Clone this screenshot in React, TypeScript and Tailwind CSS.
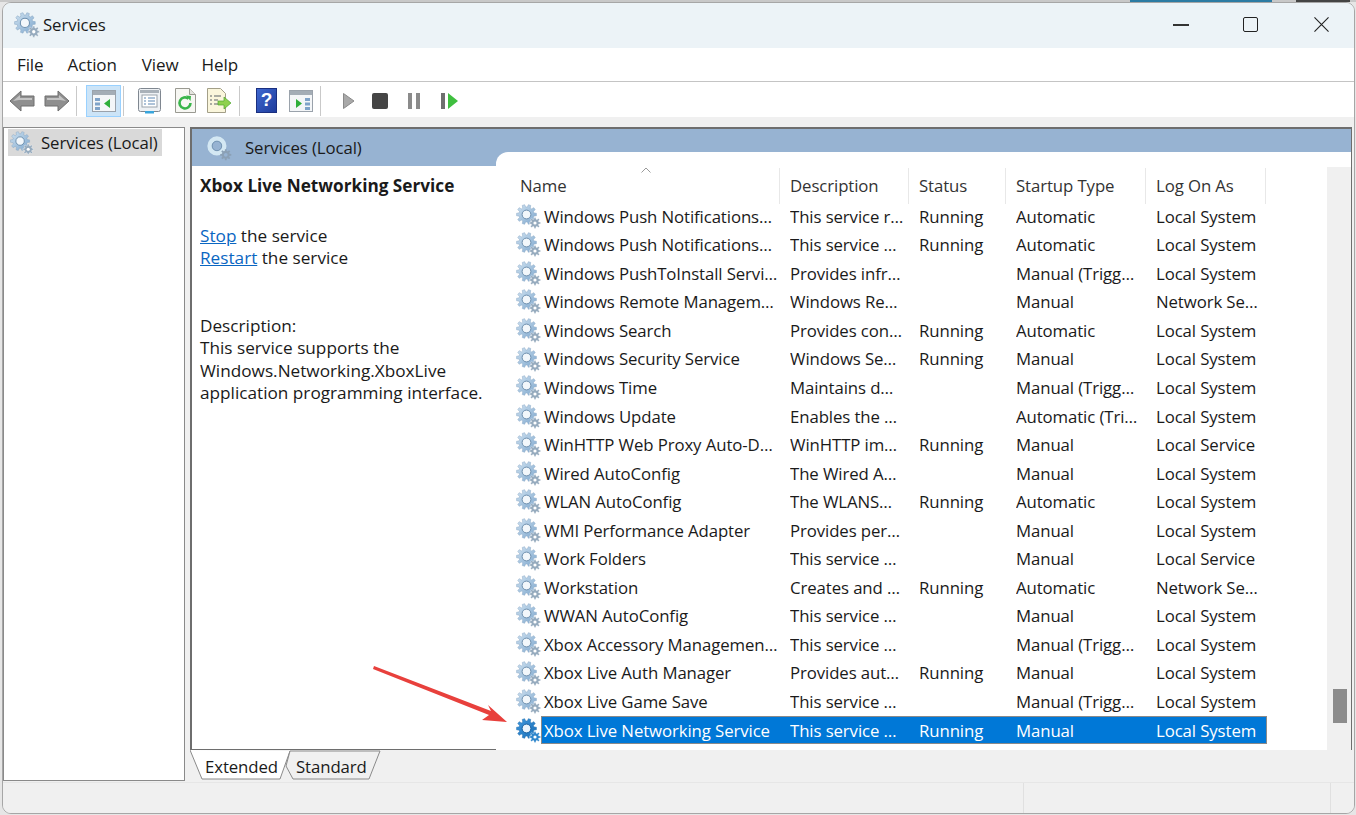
import { useId } from "react"

const rows = [
  ["Windows Push Notifications…", "This service r…", "Running", "Automatic", "Local System"],
  ["Windows Push Notifications…", "This service …", "Running", "Automatic", "Local System"],
  ["Windows PushToInstall Servi…", "Provides infr…", "", "Manual (Trigg…", "Local System"],
  ["Windows Remote Managem…", "Windows Re…", "", "Manual", "Network Se…"],
  ["Windows Search", "Provides con…", "Running", "Automatic", "Local System"],
  ["Windows Security Service", "Windows Se…", "Running", "Manual", "Local System"],
  ["Windows Time", "Maintains d…", "", "Manual (Trigg…", "Local System"],
  ["Windows Update", "Enables the …", "", "Automatic (Tri…", "Local System"],
  ["WinHTTP Web Proxy Auto-D…", "WinHTTP im…", "Running", "Manual", "Local Service"],
  ["Wired AutoConfig", "The Wired A…", "", "Manual", "Local System"],
  ["WLAN AutoConfig", "The WLANS…", "Running", "Automatic", "Local System"],
  ["WMI Performance Adapter", "Provides per…", "", "Manual", "Local System"],
  ["Work Folders", "This service …", "", "Manual", "Local Service"],
  ["Workstation", "Creates and …", "Running", "Automatic", "Network Se…"],
  ["WWAN AutoConfig", "This service …", "", "Manual", "Local System"],
  ["Xbox Accessory Managemen…", "This service …", "", "Manual (Trigg…", "Local System"],
  ["Xbox Live Auth Manager", "Provides aut…", "Running", "Manual", "Local System"],
  ["Xbox Live Game Save", "This service …", "", "Manual (Trigg…", "Local System"],
  ["Xbox Live Networking Service", "This service …", "Running", "Manual", "Local System"],
]

function gearPath(cx: number, cy: number, outer: number, inner: number, teeth: number) {
  const pts: string[] = []
  const step = (Math.PI * 2) / teeth
  for (let i = 0; i < teeth; i++) {
    const a = i * step
    const offs: [number, number][] = [
      [-0.32, inner],
      [-0.2, outer],
      [0.2, outer],
      [0.32, inner],
    ]
    for (const [o, r] of offs) {
      const t = a + o * step
      pts.push(`${(cx + Math.cos(t) * r).toFixed(2)},${(cy + Math.sin(t) * r).toFixed(2)}`)
    }
  }
  return "M" + pts.join("L") + "Z"
}

function Gear({ size = 25, selected = false }: { size?: number; selected?: boolean }) {
  const id = useId()
  return (
    <svg width={size} height={size} viewBox="0 0 25 25" className="shrink-0">
      <defs>
        <linearGradient id={id} x1="0" y1="0" x2="1" y2="1">
          <stop offset="0" stopColor={selected ? "#3f97dc" : "#cfe2f1"} />
          <stop offset="1" stopColor={selected ? "#1a6fb8" : "#7ea7cd"} />
        </linearGradient>
      </defs>
      <path d={gearPath(10.5, 10.5, 10, 7.6, 10)} fill={`url(#${id})`} stroke={selected ? "#1f6cae" : "#8aa9c6"} strokeWidth="0.5" />
      <circle cx="10.5" cy="10.5" r="4.4" fill={selected ? "#eaf4fc" : "#f2f7fb"} stroke={selected ? "#17609f" : "#6d8fae"} strokeWidth="1" />
      <path d={gearPath(19, 19, 5.6, 4, 8)} fill={selected ? "#2f86cc" : "#96abbe"} stroke="#fff" strokeWidth="0.4" />
      <circle cx="19" cy="19" r="1.6" fill="#fff" />
    </svg>
  )
}

function FadedGear() {
  return (
    <svg width="26" height="26" viewBox="0 0 25 25" className="shrink-0">
      <circle cx="10.5" cy="10.5" r="7" fill="none" stroke="#d4e8f3" strokeWidth="4.4" />
      <circle cx="10.5" cy="10.5" r="4.6" fill="#97b3d2" stroke="#6a8cab" strokeWidth="0.8" />
      <path d={gearPath(19, 19, 5.4, 3.8, 8)} fill="#8ba0b5" />
      <circle cx="19" cy="19" r="1.8" fill="#97b3d2" />
    </svg>
  )
}

function NavArrow({ flip = false }: { flip?: boolean }) {
  return (
    <svg width="26" height="24" viewBox="0 0 26 24" className={flip ? "-scale-x-100" : ""}>
      <path d="M1 12 12 2v5h13v10H12v5Z" fill="#8f8f8f" stroke="#6e6e6e" />
      <path d="M4 12 11 6v3h12v2H10Z" fill="#c4c4c4" />
    </svg>
  )
}

function PaneIcon({ side }: { side: "left" | "right" }) {
  const listX = side === "left" ? 3 : 16
  const arrow = side === "left" ? "M18 10v9l-6-4.5Z" : "M7 10v9l6-4.5Z"
  return (
    <svg width="24" height="24" viewBox="0 0 24 24">
      <rect x="0.5" y="1.5" width="23" height="21" fill="#f4f6f8" stroke="#9aa2ab" />
      <rect x="1" y="2" width="22" height="4" fill="#a4adb6" />
      <rect x={listX} y="9" width="5" height="3" fill="#7fa3c9" />
      <rect x={listX} y="13.5" width="5" height="3" fill="#7fa3c9" />
      <rect x={listX} y="18" width="5" height="3" fill="#7fa3c9" />
      <path d={arrow} fill="#2fae3a" />
    </svg>
  )
}

function PropsIcon() {
  return (
    <svg width="23" height="26" viewBox="0 0 23 26">
      <rect x="0.5" y="0.5" width="22" height="23" rx="2" fill="#eef1f4" stroke="#7f8790" />
      <rect x="2" y="2" width="19" height="3" fill="#a9b1b9" />
      <rect x="4" y="7" width="15" height="12" fill="#fff" stroke="#9aa3ab" />
      <path d="M6 10h2M6 13h2M6 16h2M10 10h7M10 13h7M10 16h7" stroke="#5f87b3" strokeWidth="1.2" />
      <rect x="7" y="23" width="9" height="2.5" fill="#38a5dc" />
    </svg>
  )
}

function RefreshIcon() {
  return (
    <svg width="21" height="25" viewBox="0 0 21 25">
      <path d="M.5.5h14l6 6v18H.5Z" fill="#f7f7f3" stroke="#9a9a92" />
      <path d="M14.5.5v6h6" fill="#e4e4de" stroke="#9a9a92" />
      <path d="M15.5 15a5.5 5.5 0 1 1-2-4.3" fill="none" stroke="#39b54a" strokeWidth="2.6" />
      <path d="M11 7.5l5 .5-.5 5Z" fill="#39b54a" />
    </svg>
  )
}

function ExportIcon() {
  return (
    <svg width="25" height="25" viewBox="0 0 25 25">
      <path d="M.5.5h13l5 5v19H.5Z" fill="#faf6dc" stroke="#a39f88" />
      <path d="M3 8h2M3 12h2M3 16h2M7 8h7M7 12h4M7 16h4" stroke="#5a6268" strokeWidth="1.2" />
      <path d="M11 13h6V9l7 6-7 6v-4h-6Z" fill="#8fd14f" stroke="#4ea72e" strokeWidth="0.7" />
    </svg>
  )
}

function HelpIcon() {
  return (
    <div className="flex h-[25px] w-[21px] items-center justify-center border border-[#1a2f80] bg-gradient-to-br from-[#3f68d0] to-[#1f3c9c] font-['Liberation_Sans',sans-serif] text-[19px] font-bold text-white">
      ?
    </div>
  )
}

function Sep() {
  return <div className="h-[30px] w-px shrink-0 bg-[#c9c9c9]" />
}

function Toolbar() {
  return (
    <div className="flex h-[35px] shrink-0 items-center bg-white pl-[6px] pt-[2px]">
      <div className="flex w-[66px] items-center justify-between pr-[5px]">
        <NavArrow />
        <NavArrow flip />
      </div>
      <div className="ml-[1px]"><Sep /></div>
      <div className="ml-[9px] flex h-[32px] w-[35px] items-center justify-center border border-[#99d1ff] bg-[#cce4f7]">
        <PaneIcon side="left" />
      </div>
      <div className="ml-[2px]"><Sep /></div>
      <div className="ml-[14px]"><PropsIcon /></div>
      <div className="ml-[14px]"><RefreshIcon /></div>
      <div className="ml-[11px]"><ExportIcon /></div>
      <div className="ml-[7px]"><Sep /></div>
      <div className="ml-[16px]"><HelpIcon /></div>
      <div className="ml-[12px]"><PaneIcon side="right" /></div>
      <div className="ml-[7px]"><Sep /></div>
      <svg width="14" height="18" viewBox="0 0 14 18" className="ml-[21px]">
        <path d="M1.5 1.5 12 9 1.5 16.5Z" fill="#a9a9a9" stroke="#8a8a8a" />
      </svg>
      <div className="ml-[16px] h-[16px] w-[16px] rounded-[2px] bg-[#454545]" />
      <div className="ml-[20px] flex gap-[4px]">
        <div className="h-[16px] w-[4px] bg-[#8b8b8b]" />
        <div className="h-[16px] w-[4px] bg-[#8b8b8b]" />
      </div>
      <div className="ml-[21px] flex items-center gap-[2px]">
        <div className="h-[16px] w-[4px] bg-[#6f6f6f]" />
        <svg width="11" height="16" viewBox="0 0 11 16">
          <path d="M1 0 11 8 1 16Z" fill="#3fbf3f" />
        </svg>
      </div>
    </div>
  )
}

function Row({ r, selected }: { r: string[]; selected: boolean }) {
  return (
    <div className="flex h-[28.55px] items-center pl-[20px]">
      <Gear selected={selected} />
      <div
        className={
          "flex h-[28.55px] items-center " +
          (selected ? "bg-[#0078d7] text-white outline outline-1 -outline-offset-1 outline-[#8a8a8a]" : "text-[#1a1a1a]")
        }
      >
        <div className="w-[249px] truncate pl-[3px]">{r[0]}</div>
        <div className="w-[129px] truncate">{r[1]}</div>
        <div className="w-[97px] truncate">{r[2]}</div>
        <div className="w-[140px] truncate">{r[3]}</div>
        <div className="w-[111px] truncate">{r[4]}</div>
      </div>
    </div>
  )
}

function HeadCell({ w, children }: { w: string; children: string }) {
  return <div className={w + " flex h-[36px] items-center border-r border-[#e8e8e8] pl-[10px] text-[#333]"}>{children}</div>
}

export default function App() {
  return (
    <div className="relative flex h-[815px] w-[1356px] flex-col overflow-hidden bg-[#e6e6e6] font-['Open_Sans','Noto_Sans',sans-serif] text-[16.8px] tracking-[-0.1px] text-[#1a1a1a]">
      <div className="flex h-[2px] shrink-0 bg-[#c8c8c8]">
        <div className="ml-[1130px] w-[142px] bg-[#2c7ba3]" />
        <div className="ml-[24px] w-[54px] bg-[#444]" />
      </div>
      <div className="ml-[2px] mr-[1px] flex h-[812px] flex-col overflow-hidden rounded-[9px] border border-[#a6a6a6] bg-[#f0f0f0]">
        <div className="flex h-[45px] shrink-0 items-center bg-[#ecf3f7] pb-[2px] pl-[11px]">
          <Gear size={26} />
          <span className="ml-[3px]">Services</span>
          <div className="ml-auto mr-[25px] flex items-center">
            <div className="h-[2px] w-[16px] bg-[#333]" />
            <div className="ml-[54px] h-[15px] w-[15px] rounded-[2px] border-[1.5px] border-[#222]" />
            <svg width="15" height="15" viewBox="0 0 16 16" className="ml-[56px]">
              <path d="M.5.5l15 15M15.500.5l-15 15" stroke="#222" strokeWidth="1.2" fill="none" />
            </svg>
          </div>
        </div>
        <div className="flex h-[34px] shrink-0 items-center border-b border-[#c4c4c4] bg-white pl-[14px] pt-[1px] text-[17px]">
          <span>File</span>
          <span className="ml-[24px]">Action</span>
          <span className="ml-[25px]">View</span>
          <span className="ml-[23px]">Help</span>
        </div>
        <Toolbar />
        <div className="h-[10px] shrink-0 bg-[#f0f0f0]" />
        <div className="flex min-h-0 flex-1">
          <div className="h-[654px] w-[182px] shrink-0 border border-[#8a8a8a] bg-white pl-[4px] pt-[1px]">
            <div className="flex h-[27px] w-[154px] items-center bg-[#d9d9d9] pl-[2px]">
              <Gear size={24} />
              <span className="ml-[7px]">Services (Local)</span>
            </div>
          </div>
          <div className="ml-[5px] mr-[2px] flex h-[654px] min-w-0 flex-1 flex-col">
            <div className="flex h-[623px] border border-t-2 border-l-2 border-[#6e6e6e] bg-white">
              <div className="w-[304px] shrink-0">
                <div className="flex h-[37px] items-center bg-[#97b3d2] pl-[14px]">
                  <FadedGear />
                  <span className="ml-[13px]">Services (Local)</span>
                </div>
                <div className="pl-[8px] text-[17.2px] leading-[22.5px] tracking-normal">
                  <div className="mt-[9px] font-bold">Xbox Live Networking Service</div>
                  <div className="mt-[27px]">
                    <span className="text-[#0a66c2] underline">Stop</span> the service
                  </div>
                  <div>
                    <span className="text-[#0a66c2] underline">Restart</span> the service
                  </div>
                  <div className="mt-[45px]">Description:</div>
                  <div>This service supports the</div>
                  <div>Windows.Networking.XboxLive</div>
                  <div>application programming interface.</div>
                </div>
              </div>
              <div className="min-w-0 flex-1 bg-[#97b3d2] pt-[23px]">
                <div className="flex h-[598px] rounded-tl-[12px] bg-white">
                  <div className="w-[831px] shrink-0 pt-[16px]">
                    <div className="relative flex h-[36px] pl-[14px]">
                      <HeadCell w="w-[270px]">Name</HeadCell>
                      <HeadCell w="w-[129px]">Description</HeadCell>
                      <HeadCell w="w-[97px]">Status</HeadCell>
                      <HeadCell w="w-[140px]">Startup Type</HeadCell>
                      <HeadCell w="w-[120px]">Log On As</HeadCell>
                      <svg width="10" height="6" viewBox="0 0 10 6" className="absolute left-[145px] top-[-1px]">
                        <path d="M.5 5.5 5 1l4.500 4.500" fill="none" stroke="#9a9a9a" />
                      </svg>
                    </div>
                    <div className="-mt-[2px]">
                      {rows.map((r, i) => (
                        <Row key={r[0] + i} r={r} selected={i === rows.length - 1} />
                      ))}
                    </div>
                  </div>
                  <div className="mt-[15px] flex-1 bg-[#f0f0f0] pl-[6px] pt-[522px]">
                    <div className="h-[34px] w-[14px] bg-[#8c8c8c]" />
                  </div>
                </div>
              </div>
            </div>
            <div className="relative flex h-[31px] items-start bg-[#f0f0f0] pl-[15px] pt-[4px]">
              <svg width="200" height="30" viewBox="0 0 200 30" className="absolute left-0 top-0">
                <path d="M0 0 12 29H90L100 1" fill="#fff" stroke="#8a8a8a" />
                <path d="M96 16 100 1H190L179 29H103Z" fill="#f0f0f0" stroke="#8a8a8a" />
              </svg>
              <span className="relative w-[91px]">Extended</span>
              <span className="relative">Standard</span>
            </div>
          </div>
        </div>
        <div className="flex h-[31px] shrink-0 border-t border-[#e6e6e6] bg-[#f0f0f0]">
          <div className="w-[1021px] border-r border-[#e0e0e0]" />
          <div className="w-[307px] border-r border-[#e0e0e0]" />
        </div>
      </div>
      <svg width="150" height="70" viewBox="0 0 150 70" className="absolute left-[370px] top-[660px]">
        <path d="M4 6 121 51 118 45 137 62 112 60 119 55 3 9Z" fill="#e8403c" />
      </svg>
    </div>
  )
}
